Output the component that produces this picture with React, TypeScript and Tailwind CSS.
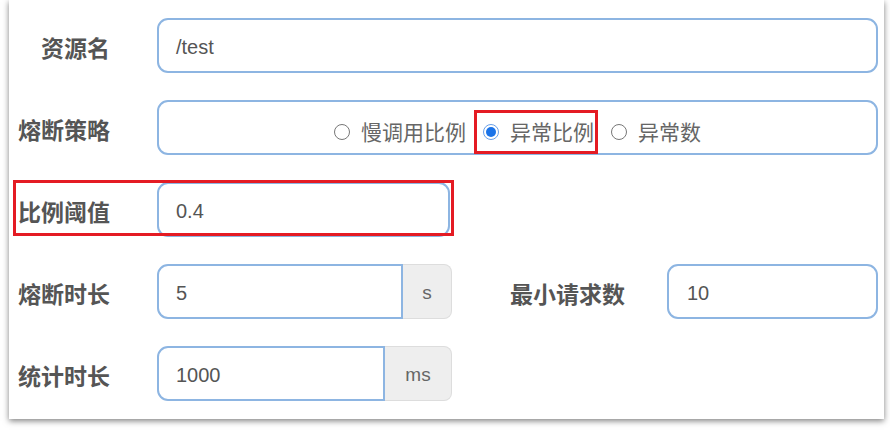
import React from "react";

const font = { fontFamily: "'Liberation Sans', 'Noto Sans CJK SC', sans-serif" };

function Label({ children, className = "" }: { children: React.ReactNode; className?: string }) {
  return (
    <div className={`w-[101px] shrink-0 pt-[8px] text-right text-[23px] font-bold text-[#555] leading-none ${className}`}>
      {children}
    </div>
  );
}

function Radio({ label, checked }: { label: string; checked?: boolean }) {
  return (
    <span className="flex items-center gap-[11px] text-[21px] text-[#666] leading-none">
      {checked ? (
        <span className="w-[16px] h-[16px] rounded-full border border-[#6aa0e8] bg-white flex items-center justify-center">
          <span className="w-[10px] h-[10px] rounded-full bg-[#1a73e8]" />
        </span>
      ) : (
        <span className="w-[16px] h-[16px] rounded-full border-[1.5px] border-[#777] bg-white" />
      )}
      {label}
    </span>
  );
}

export default function App() {
  return (
    <div className="w-[890px] h-[438px] bg-white overflow-hidden" style={font}>
      <div className="ml-[9px] w-[875px] h-[419px] bg-white shadow-[0_2px_6px_rgba(0,0,0,0.5)] pt-[18px] pr-[6px] flex flex-col gap-[27px]">
        {/* 资源名 */}
        <div className="flex items-center gap-[47px] h-[55px]">
          <Label>资源名</Label>
          <div className="flex-1 h-full rounded-[11px] border-2 border-[#8db5e2] flex items-center pl-[17px] pt-[3px] text-[20px] text-[#555]">
            /test
          </div>
        </div>

        {/* 熔断策略 */}
        <div className="flex items-center gap-[47px] h-[55px]">
          <Label>熔断策略</Label>
          <div className="flex-1 h-full rounded-[11px] border-2 border-[#8db5e2] flex items-center justify-center pt-[9px] gap-[17px]">
            <Radio label="慢调用比例" />
            <span className="relative flex items-center">
              <Radio label="异常比例" checked />
              <span className="absolute -left-[9px] -right-[4px] -top-[12px] -bottom-[11px] border-[3px] border-[#e41b23]" />
            </span>
            <Radio label="异常数" />
          </div>
        </div>

        {/* 比例阈值 */}
        <div className="relative flex items-center gap-[47px] h-[55px]">
          <Label className="pl-[9px] text-left">比例阈值</Label>
          <div className="w-[293px] h-full rounded-[11px] border-2 border-[#8db5e2] flex items-center pl-[17px] pt-[3px] text-[20px] text-[#555]">
            0.4
          </div>
          <span className="absolute left-[4px] w-[441px] -top-[2px] h-[56px] border-[3px] border-[#e41b23]" />
        </div>

        {/* 熔断时长 / 最小请求数 */}
        <div className="flex items-center h-[55px]">
          <Label>熔断时长</Label>
          <div className="ml-[47px] flex h-full">
            <div className="w-[246px] h-full rounded-l-[11px] border-2 border-[#8db5e2] flex items-center pl-[17px] pt-[3px] text-[20px] text-[#555]">
              5
            </div>
            <div className="w-[49px] h-full rounded-r-[8px] border border-l-0 border-[#ddd] bg-[#eee] flex items-center justify-center pt-[3px] text-[19px] text-[#666]">
              s
            </div>
          </div>
          <div className="ml-[58px] pt-[8px] text-[23px] font-bold text-[#555] leading-none">最小请求数</div>
          <div className="ml-[42px] flex-1 h-full rounded-[11px] border-2 border-[#8db5e2] flex items-center pl-[18px] pt-[3px] text-[20px] text-[#555]">
            10
          </div>
        </div>

        {/* 统计时长 */}
        <div className="flex items-center h-[55px]">
          <Label>统计时长</Label>
          <div className="ml-[47px] flex h-full">
            <div className="w-[228px] h-full rounded-l-[11px] border-2 border-[#8db5e2] flex items-center pl-[17px] pt-[3px] text-[20px] text-[#555]">
              1000
            </div>
            <div className="w-[67px] h-full rounded-r-[8px] border border-l-0 border-[#ddd] bg-[#eee] flex items-center justify-center pt-[3px] text-[19px] text-[#666]">
              ms
            </div>
          </div>
        </div>
      </div>
    </div>
  );
}
